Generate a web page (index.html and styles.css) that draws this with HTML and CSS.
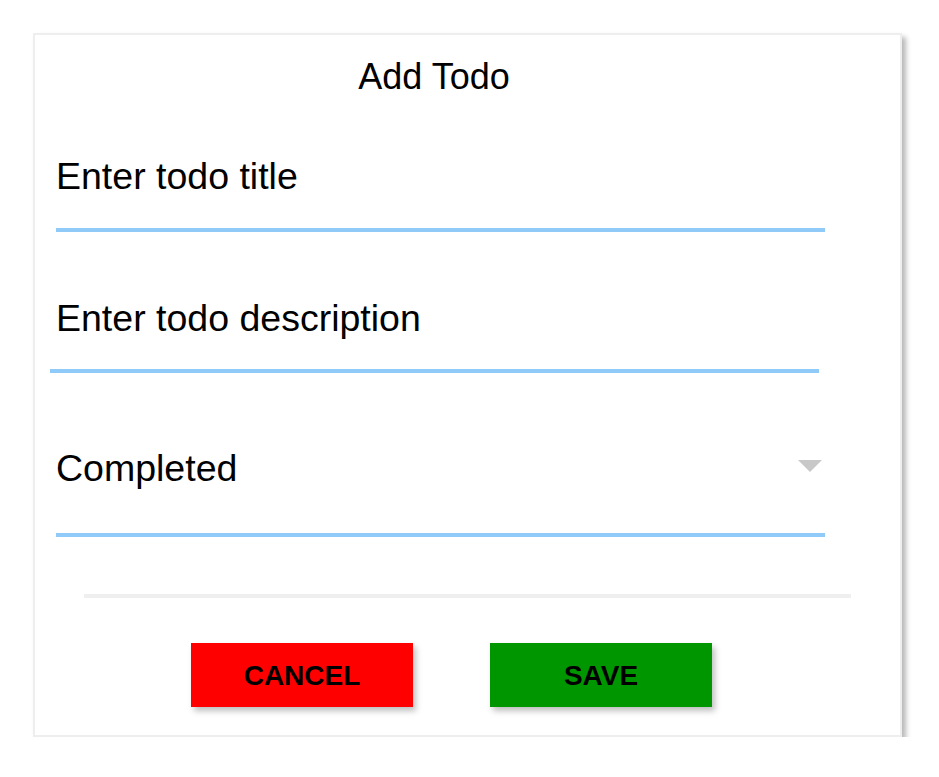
FILE: index.html
```html
<!DOCTYPE html>
<html lang="en">
<head>
<meta charset="utf-8">
<title>Add Todo</title>
<link rel="stylesheet" href="styles.css">
</head>
<body>
<div class="card">
  <h2 class="title">Add Todo</h2>
  <div class="field field-title">
    <div class="field-text">Enter todo title</div>
  </div>
  <div class="field field-desc">
    <div class="field-text">Enter todo description</div>
  </div>
  <div class="field field-select">
    <div class="field-text">Completed</div>
    <svg class="arrow" width="24" height="12" viewBox="0 0 24 12"><polygon points="0,0 24,0 12,12" fill="#c8c8c8"/></svg>
  </div>
  <div class="divider"></div>
  <div class="actions">
    <button class="btn btn-cancel">CANCEL</button>
    <button class="btn btn-save">SAVE</button>
  </div>
</div>
</body>
</html>
```
FILE: styles.css
```css
* { box-sizing: border-box; }
html, body { margin: 0; padding: 0; background: #fff; }
body { font-family: "Liberation Sans", Arial, sans-serif; color: #000; }

.card {
  margin: 33px 0 0 33px;
  width: 869px;
  height: 704px;
  border: 2px solid #eeeeee;
  background: #fff;
  box-shadow: 4px 4px 5px rgba(0, 0, 0, 0.28);
  padding-top: 22px;
}

.title {
  margin: 0;
  font-size: 36px;
  font-weight: normal;
  line-height: 40px;
  text-align: center;
  padding-right: 67px;
}

.field {
  width: 769px;
  margin-left: 21px;
  border-bottom: 4px solid #90caf9;
  display: flex;
  align-items: center;
  justify-content: space-between;
}

.field-text {
  font-size: 37.5px;
  line-height: 40px;
  white-space: nowrap;
}

.field-title { margin-top: 59px; padding-bottom: 32px; }
.field-desc { margin-top: 66px; margin-left: 15px; padding-left: 6px; padding-bottom: 31px; }
.field-select {
  margin-top: 75px;
  padding-bottom: 45px;
  padding-right: 3px;
  align-items: flex-start;
}
.field-select .arrow { margin-top: 12px; display: block; }

.divider {
  margin: 57px 0 0 49px;
  width: 767px;
  height: 4px;
  background: #efefef;
}

.actions {
  display: flex;
  gap: 77px;
  margin: 45px 0 0 156px;
}

.btn {
  width: 222px;
  height: 64px;
  border: none;
  padding: 0;
  font-family: "Liberation Sans", Arial, sans-serif;
  font-weight: bold;
  font-size: 28px;
  line-height: 66px;
  color: #000;
  box-shadow: 3px 4px 6px rgba(0, 0, 0, 0.25);
  cursor: pointer;
}
.btn-cancel { background: #ff0000; }
.btn-save { background: #009600; }
```
